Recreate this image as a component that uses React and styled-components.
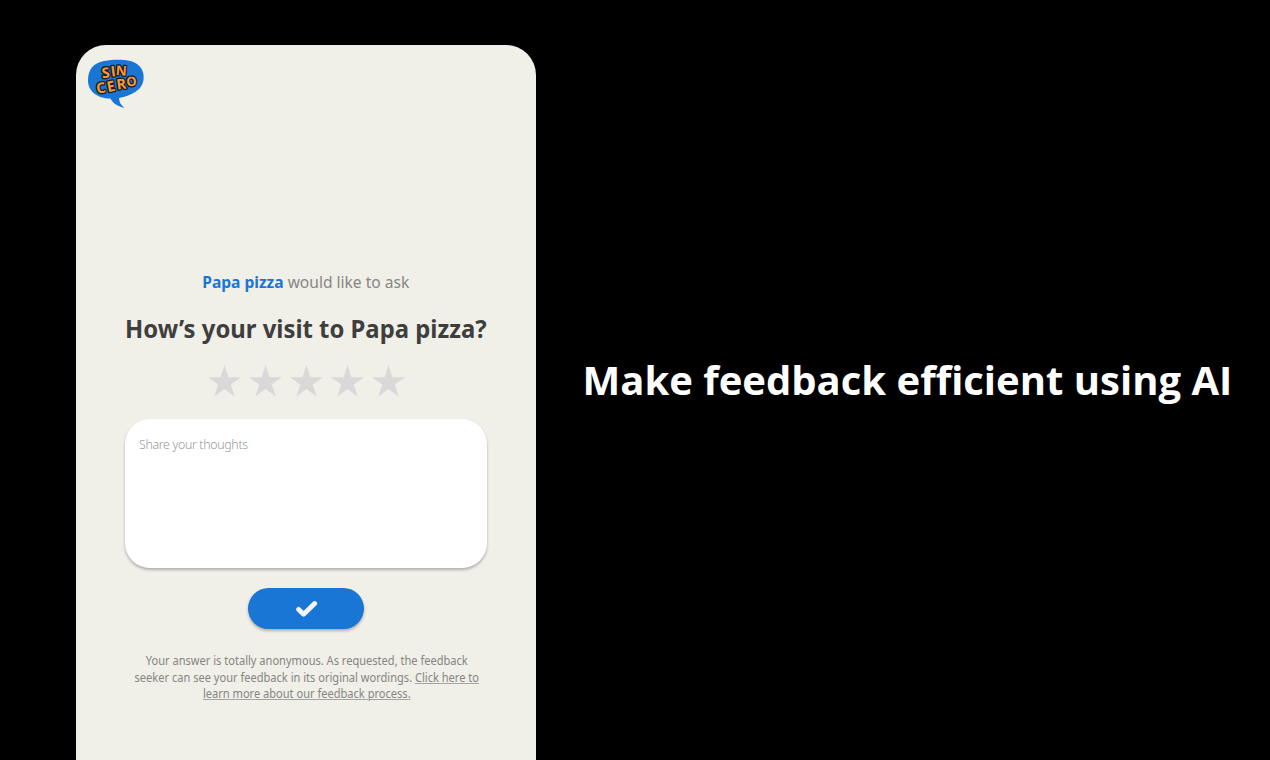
import React from 'react'
import styled, { createGlobalStyle } from 'styled-components'

const GlobalStyle = createGlobalStyle`
  * {
    box-sizing: border-box;
  }
  body {
    margin: 0;
    background: #000;
    overflow: hidden;
  }
`

const Page = styled.main`
  display: grid;
  grid-template-columns: 460px 1fr;
  gap: 46.5px;
  height: 760px;
  padding: 45px 0 0 76px;
  background: #000;
  font-family: 'Noto Sans', sans-serif;
`

const Card = styled.section`
  display: flex;
  flex-direction: column;
  align-items: center;
  background: #f0efe8;
  border-radius: 30px 30px 0 0;
`

const LogoStyle = styled.svg`
  align-self: flex-start;
  width: 60px;
  height: 54px;
  margin: 12px 0 0 10px;
  text {
    font-family: 'Open Sans', sans-serif;
    font-weight: 700;
    fill: #f79a3b;
    stroke: #1b1a1c;
    stroke-width: 2.6px;
    stroke-linejoin: round;
    paint-order: stroke;
    text-anchor: middle;
  }
`

const Intro = styled.p`
  margin: 159px 0 0;
  font-size: 16.5px;
  line-height: 24px;
  color: #868684;
  white-space: nowrap;
  transform: scaleX(0.943);
  strong {
    font-weight: 700;
    color: #1976d5;
  }
`

const Question = styled.h1`
  margin: 19px 0 0;
  font-size: 24.4px;
  line-height: 32px;
  font-weight: 700;
  color: #3e3e3e;
  white-space: nowrap;
  transform: scaleX(0.978);
`

const Stars = styled.div`
  display: flex;
  gap: 8px;
  margin-top: 20px;
  svg {
    display: block;
    width: 33px;
    height: 32px;
    fill: #d9d9d9;
  }
`

const Thoughts = styled.textarea`
  width: 362px;
  height: 149px;
  margin-top: 22px;
  padding: 17px 14px;
  border: 0;
  border-radius: 25px;
  background: #fff;
  box-shadow: 0 2px 3px rgba(0, 0, 0, 0.27);
  font-family: inherit;
  font-size: 12.4px;
  line-height: 18px;
  font-weight: 300;
  letter-spacing: -0.34px;
  resize: none;
  &::placeholder {
    color: #999;
    opacity: 1;
  }
`

const Submit = styled.button`
  display: flex;
  align-items: center;
  justify-content: center;
  width: 116px;
  height: 41px;
  margin-top: 20px;
  padding: 0 0 0 1px;
  border: 0;
  border-radius: 21px;
  background: #1976d5;
  box-shadow: 0 2px 3px rgba(0, 0, 0, 0.27);
  svg {
    fill: none;
    stroke: #f4f4f2;
    stroke-width: 4.8px;
    stroke-linecap: round;
    stroke-linejoin: round;
  }
`

const Note = styled.p`
  margin: 24px 0 0 1px;
  font-size: 12px;
  line-height: 16.5px;
  text-align: center;
  color: #868684;
  white-space: nowrap;
  transform: scaleX(0.922);
  a {
    color: inherit;
    text-decoration: underline;
    text-decoration-color: #a5a5a2;
    text-decoration-thickness: 1px;
    text-underline-offset: 1px;
  }
`

const Headline = styled.h2`
  align-self: start;
  margin: 307px 0 0;
  font-family: 'Open Sans', sans-serif;
  font-size: 40px;
  line-height: 56px;
  font-weight: 700;
  color: #fff;
  white-space: nowrap;
`

const letters = [
  { char: 'S', x: 20.2, y: 20.8, turn: -6, size: 14.5 },
  { char: 'I', x: 27.8, y: 19.4, turn: -8, size: 14.5 },
  { char: 'N', x: 35, y: 18.4, turn: 4, size: 13.5 },
  { char: 'C', x: 15.8, y: 36, turn: -10, size: 14.5 },
  { char: 'E', x: 26, y: 34.4, turn: -12, size: 14.5 },
  { char: 'R', x: 36, y: 32.2, turn: -8, size: 14.5 },
  { char: 'O', x: 46, y: 29, turn: -8, size: 13 },
]

function Logo() {
  return <LogoStyle viewBox="0 0 60 54">
    <path
      d="M2 23.5C2 13 7 6 18 4C30 2 44 2 51 7C57 11.5 58.2 17 57.5 23C56 33 46 38.5 33 41C33 45 35 48 38.5 51C31 49 26.5 46 24.5 41.5C11 41.5 2 34 2 23.5Z"
      fill="#1976d5"
    />
    {letters.map(({ char, x, y, turn, size }) => (
      <text key={char} fontSize={size} transform={`translate(${x} ${y}) rotate(${turn})`}>{char}</text>
    ))}
  </LogoStyle>
}

function Star() {
  return <svg viewBox="0 0 33 32">
    <path d="M16.5 0L20.4 12.2H33L22.8 19.5L26.7 31.5L16.5 24L6.3 31.5L10.2 19.5L0 12.2H12.6Z" />
  </svg>
}

function App() {
  return <>
    <GlobalStyle />
    <Page>
      <Card>
        <Logo />
        <Intro><strong>Papa pizza</strong> would like to ask</Intro>
        <Question>How’s your visit to Papa pizza?</Question>
        <Stars>
          {[1, 2, 3, 4, 5].map((n) => <Star key={n} />)}
        </Stars>
        <Thoughts placeholder="Share your thoughts" />
        <Submit>
          <svg width="22" height="16" viewBox="0 0 22 16">
            <path d="M2.6 8.4L7.6 13.2L18.7 2.5" />
          </svg>
        </Submit>
        <Note>
          Your answer is totally anonymous. As requested, the feedback<br />
          seeker can see your feedback in its original wordings. <a>Click here to<br />
          learn more about our feedback process.</a>
        </Note>
      </Card>
      <Headline>Make feedback efficient using AI</Headline>
    </Page>
  </>
}

export default App
